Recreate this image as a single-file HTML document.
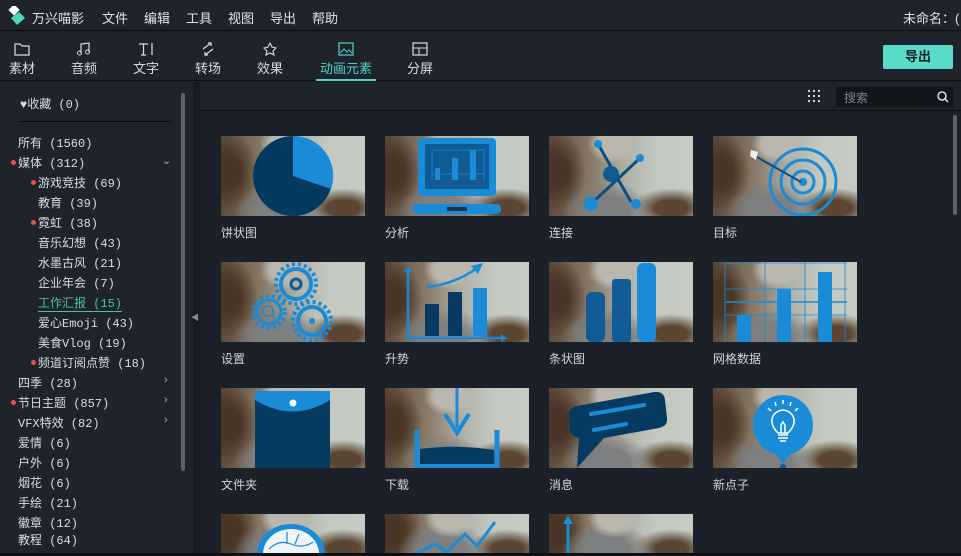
<!DOCTYPE html>
<html style="width:961px;height:556px;overflow:hidden"><head><meta charset="utf-8"><style>
*{margin:0;padding:0;box-sizing:border-box}
body{width:961px;height:556px;background:#1c2129;font-family:"Liberation Sans","Noto Sans CJK SC",sans-serif;color:#d8dde5;position:relative;overflow:hidden;font-size:13px}
.abs{position:absolute}
.top{left:0;top:0;width:961px;height:31px;background:#1f242c;border-bottom:1px solid #0c0f13}
.menu span{position:absolute;top:8px;font-size:13px;color:#e0e4ea}
.tb{left:0;top:32px;width:961px;height:49px;background:#1f242c;border-bottom:1px solid #0c0f13}
.tab{position:absolute;top:0;text-align:center;font-size:13px;color:#d8dde5}
.tab svg{display:block;margin:10px auto 2px}
.left{left:0;top:82px;width:193px;height:474px;background:#1f242c}
.li{position:absolute;font-size:12px;color:#d8dde5;white-space:nowrap;font-family:"Liberation Mono","Noto Sans CJK SC",monospace}
.dot{position:absolute;width:5px;height:5px;border-radius:50%;background:#e84b4b}
.arr{position:absolute;right:22px;color:#aab;font-size:11px}
.th{position:absolute;width:144px;height:80px;overflow:hidden;background-repeat:no-repeat;
background:
radial-gradient(ellipse 26px 20px at 45% 10%,#bab7ae 60%,transparent 100%) no-repeat,
radial-gradient(ellipse 45px 30px at 40% 95%,#7d7f80 50%,transparent 100%) no-repeat,
radial-gradient(ellipse 30px 40px at 5% 45%,#4a3626 40%,transparent 100%) no-repeat,
radial-gradient(ellipse 40px 20px at 85% 90%,#5a4632 40%,transparent 100%) no-repeat,
linear-gradient(90deg,#5c4a3a 0%,#8a7c6a 30%,#b1b3aa 55%,#c3c9c1 75%,#c6ccc4 100%)}
.th svg{position:absolute;left:0;top:0}
.lb{position:absolute;font-size:12px;color:#d0d6de}
</style></head><body>
<div class="abs top"></div>
<svg class="abs" style="left:8px;top:6px" width="18" height="20"><rect x="2" y="0" width="8" height="8" transform="rotate(45 6 4)" fill="#fff"/><path d="M3 12 L11 6 L17 12 L9 19Z" fill="#4fd6bf"/></svg>
<div class="menu"><span style="left:32px">万兴喵影</span><span style="left:102px">文件</span><span style="left:144px">编辑</span><span style="left:186px">工具</span><span style="left:228px">视图</span><span style="left:270px">导出</span><span style="left:312px">帮助</span><span style="left:903px">未命名：(</span></div>
<div class="abs tb"></div>
<div class="abs" style="left:0;top:32px;width:961px;height:50px">
<div class="tab" style="left:8px;width:28px"><svg width="16" height="14"><path d="M1 2h5l2 2h7v9H1z" fill="none" stroke="#d8dde5" stroke-width="1.2"/></svg>素材</div>
<div class="tab" style="left:70px;width:28px"><svg width="16" height="14"><path d="M5 11V2l8-1v9" fill="none" stroke="#d8dde5" stroke-width="1.2"/><circle cx="3.5" cy="11" r="2" fill="none" stroke="#d8dde5"/><circle cx="11.5" cy="10" r="2" fill="none" stroke="#d8dde5"/></svg>音频</div>
<div class="tab" style="left:132px;width:28px"><svg width="16" height="14"><path d="M1 2h9M5.5 2v11M3 13h5M14 1v12" fill="none" stroke="#d8dde5" stroke-width="1.2"/></svg>文字</div>
<div class="tab" style="left:194px;width:28px"><svg width="16" height="14"><path d="M3 7l8-6M8 1h3v3M13 7l-8 6M8 13H5v-3" fill="none" stroke="#d8dde5" stroke-width="1.2"/></svg>转场</div>
<div class="tab" style="left:256px;width:28px"><svg width="16" height="14"><path d="M8 1l2 4 4 1-3 3 1 4-4-2-4 2 1-4-3-3 4-1z" fill="none" stroke="#d8dde5" stroke-width="1.1"/></svg>效果</div>
<div class="tab" style="left:318px;width:56px;color:#4fd6bf"><svg width="16" height="14"><rect x="1" y="1" width="14" height="12" fill="none" stroke="#4fd6bf" stroke-width="1.2"/><path d="M2 11l4-4 3 3 2-2 3 3" fill="none" stroke="#4fd6bf"/></svg>动画元素<div style="height:2px;background:#4fd6bf;margin-top:2px;width:60px;margin-left:-2px"></div></div>
<div class="tab" style="left:406px;width:28px"><svg width="16" height="14"><rect x="1" y="1" width="14" height="12" fill="none" stroke="#d8dde5" stroke-width="1.2"/><path d="M1 6h14M7 6v7" stroke="#d8dde5"/></svg>分屏</div>
</div>
<div class="abs" style="left:883px;top:45px;width:70px;height:24px;background:#58dcc8;border-radius:2px;color:#17202a;font-weight:bold;font-size:13px;text-align:center;line-height:24px">导出</div>

<div class="abs left"></div>
<div class="abs" style="left:181px;top:93px;width:4px;height:378px;background:#5b6271;border-radius:2px"></div>
<div class="abs" style="left:193px;top:82px;width:7px;height:471px;background:#181c22"></div>
<div class="abs" style="left:191px;top:312px;color:#889;font-size:8px">◀</div>
<div class="li" style="left:20px;top:95px">♥收藏 (0)</div>
<div class="abs" style="left:20px;top:121px;width:151px;height:1px;background:#07090b"></div>
<div class="li" style="left:18px;top:134px">所有 (1560)</div>
<div class="dot" style="left:11px;top:160px"></div><div class="li" style="left:18px;top:154px">媒体 (312)</div><div class="arr" style="top:154px;left:162px">⌄</div>
<div class="dot" style="left:31px;top:180px"></div><div class="li" style="left:38px;top:174px">游戏竞技 (69)</div>
<div class="li" style="left:38px;top:194px">教育 (39)</div>
<div class="dot" style="left:31px;top:220px"></div><div class="li" style="left:38px;top:214px">霓虹 (38)</div>
<div class="li" style="left:38px;top:234px">音乐幻想 (43)</div>
<div class="li" style="left:38px;top:254px">水墨古风 (21)</div>
<div class="li" style="left:38px;top:274px">企业年会 (7)</div>
<div class="li" style="left:38px;top:294px;color:#4fbcb0;border-bottom:1px solid #4fbcb0">工作汇报 (15)</div>
<div class="li" style="left:38px;top:314px">爱心Emoji (43)</div>
<div class="li" style="left:38px;top:334px">美食Vlog (19)</div>
<div class="dot" style="left:31px;top:360px"></div><div class="li" style="left:38px;top:354px">频道订阅点赞 (18)</div>
<div class="li" style="left:18px;top:374px">四季 (28)</div><div class="arr" style="top:374px;left:164px">›</div>
<div class="dot" style="left:11px;top:400px"></div><div class="li" style="left:18px;top:394px">节日主题 (857)</div><div class="arr" style="top:394px;left:164px">›</div>
<div class="li" style="left:18px;top:414px">VFX特效 (82)</div><div class="arr" style="top:414px;left:164px">›</div>
<div class="li" style="left:18px;top:434px">爱情 (6)</div>
<div class="li" style="left:18px;top:454px">户外 (6)</div>
<div class="li" style="left:18px;top:474px">烟花 (6)</div>
<div class="li" style="left:18px;top:494px">手绘 (21)</div>
<div class="li" style="left:18px;top:514px">徽章 (12)</div>
<div class="li" style="left:18px;top:533px;line-height:17px;height:18px">教程 (64)</div>

<div class="abs" style="left:200px;top:82px;width:761px;height:29px;background:#1f242c;border-bottom:1px solid #0c0f13"></div>
<svg class="abs" style="left:808px;top:90px" width="14" height="14" fill="#cfd4dc"><rect x="0" y="0" width="2" height="2"/><rect x="5" y="0" width="2" height="2"/><rect x="10" y="0" width="2" height="2"/><rect x="0" y="5" width="2" height="2"/><rect x="5" y="5" width="2" height="2"/><rect x="10" y="5" width="2" height="2"/><rect x="0" y="10" width="2" height="2"/><rect x="5" y="10" width="2" height="2"/><rect x="10" y="10" width="2" height="2"/></svg>
<div class="abs" style="left:836px;top:87px;width:117px;height:20px;background:#12161b;color:#7d838c;font-size:12px;padding:2px 8px">搜索</div>
<svg class="abs" style="left:937px;top:91px" width="12" height="12"><circle cx="5" cy="5" r="4" fill="none" stroke="#dde" stroke-width="1.5"/><path d="M8 8l3 3" stroke="#dde" stroke-width="1.5"/></svg>
<div class="abs" style="left:953px;top:115px;width:4px;height:100px;background:#5b6271;border-radius:2px"></div>

<div class="th" style="left:221px;top:136px"><svg width="144" height="80"><circle cx="72" cy="40" r="40" fill="#053a60"/><path d="M72 40V0A40 40 0 0 1 110 53Z" fill="#1a8bd6"/></svg></div>
<div class="lb" style="left:221px;top:224px">饼状图</div>
<div class="th" style="left:385px;top:136px"><svg width="144" height="80"><rect x="33" y="2" width="78" height="58" rx="4" fill="#1a8bd6"/><rect x="40" y="8" width="64" height="45" fill="#0f5c95"/><path d="M47 14v30M47 38h52M47 14h52v30" stroke="#1a8bd6" fill="none" stroke-width=".8"/><rect x="50" y="32" width="5" height="12" fill="#1a8bd6"/><rect x="67" y="22" width="6" height="22" fill="#1a8bd6"/><rect x="85" y="14" width="6" height="30" fill="#1a8bd6"/><rect x="28" y="68" width="88" height="10" rx="4" fill="#1a8bd6"/><rect x="62" y="71" width="20" height="4" fill="#253545"/></svg></div>
<div class="lb" style="left:385px;top:224px">分析</div>
<div class="th" style="left:549px;top:136px"><svg width="144" height="80"><path d="M49 8L82 66M42 68L91 22" stroke="#0b4f80" stroke-width="3"/><circle cx="62" cy="38" r="8" fill="#0f5c95"/><circle cx="49" cy="8" r="4" fill="#1a8bd6"/><circle cx="91" cy="22" r="4" fill="#1a8bd6"/><circle cx="42" cy="68" r="7" fill="#1a8bd6"/><circle cx="87" cy="68" r="5" fill="#1a8bd6"/></svg></div>
<div class="lb" style="left:549px;top:224px">连接</div>
<div class="th" style="left:713px;top:136px"><svg width="144" height="80"><g fill="none" stroke="#1a8bd6" stroke-width="3"><circle cx="90" cy="46" r="33"/><circle cx="90" cy="46" r="22"/><circle cx="90" cy="46" r="11"/></g><circle cx="90" cy="46" r="4" fill="#1a8bd6"/><path d="M42 20L88 46" stroke="#0b4f80" stroke-width="2"/><path d="M38 14l7 2 -2 8 -6-4z" fill="#eee"/></svg></div>
<div class="lb" style="left:713px;top:224px">目标</div>

<div class="th" style="left:221px;top:262px"><svg width="144" height="80"><g fill="none" stroke="#1a8bd6"><circle cx="75" cy="22" r="15" stroke-width="4"/><circle cx="75" cy="22" r="20" stroke-width="4" stroke-dasharray="3 3"/><circle cx="48" cy="50" r="12" stroke-width="3"/><circle cx="48" cy="50" r="16" stroke-width="4" stroke-dasharray="3 3"/><circle cx="91" cy="59" r="14" stroke-width="4"/><circle cx="91" cy="59" r="19" stroke-width="4" stroke-dasharray="3 3"/><circle cx="47" cy="49" r="5" stroke-width="1.5"/><path d="M51 53l4 4" stroke-width="1.5"/></g><circle cx="75" cy="22" r="5" fill="none" stroke="#0f5c95" stroke-width="3"/><circle cx="91" cy="59" r="3" fill="#1a8bd6"/></svg></div>
<div class="lb" style="left:221px;top:350px">设置</div>
<div class="th" style="left:385px;top:262px"><svg width="144" height="80"><path d="M23 6V76H120" stroke="#1a8bd6" stroke-width="2.5" fill="none"/><path d="M19 10l4-6 4 6zM116 72l6 4-6 4z" fill="#1a8bd6"/><path d="M42 25Q70 22 92 6" stroke="#1a8bd6" stroke-width="2.5" fill="none"/><path d="M86 4l12-3-5 11z" fill="#1a8bd6"/><rect x="40" y="42" width="14" height="32" fill="#063a60"/><rect x="63" y="30" width="14" height="44" fill="#063a60"/><rect x="88" y="26" width="14" height="48" fill="#1a8bd6"/></svg></div>
<div class="lb" style="left:385px;top:350px">升势</div>
<div class="th" style="left:549px;top:262px"><svg width="144" height="80"><rect x="37" y="30" width="19" height="50" rx="6" fill="#115c96"/><rect x="63" y="17" width="19" height="63" rx="3" fill="#115c96"/><rect x="88" y="1" width="19" height="79" rx="6" fill="#1a8bd6"/></svg></div>
<div class="lb" style="left:549px;top:350px">条状图</div>
<div class="th" style="left:713px;top:262px"><svg width="144" height="80"><g stroke="#1a8bd6" stroke-width=".8"><path d="M12 0v80M52 0v80M92 0v80M132 0v80M12 1h122M12 27h122M12 40h122M12 53h122"/></g><path d="M12 40h122" stroke="#1a8bd6" stroke-width="1.5"/><rect x="24" y="53" width="14" height="27" fill="#1a8bd6"/><rect x="64" y="27" width="14" height="53" fill="#1a8bd6"/><rect x="105" y="10" width="14" height="70" fill="#1a8bd6"/></svg></div>
<div class="lb" style="left:713px;top:350px">网格数据</div>

<div class="th" style="left:221px;top:388px"><svg width="144" height="80"><rect x="34" y="3" width="75" height="77" fill="#063a60"/><path d="M34 3h75v9Q72 35 34 12z" fill="#1a8bd6"/><circle cx="72" cy="15" r="3.5" fill="#fff"/></svg></div>
<div class="lb" style="left:221px;top:476px">文件夹</div>
<div class="th" style="left:385px;top:388px"><svg width="144" height="80"><path d="M32 42v38M112 42v38" stroke="#1a8bd6" stroke-width="5"/><path d="M35 61Q72 56 109 62v15H35z" fill="#063a60"/><path d="M72 0v40" stroke="#1a8bd6" stroke-width="3"/><path d="M60 26l12 19 12-19" stroke="#1a8bd6" stroke-width="4" fill="none"/><path d="M32 78h80" stroke="#1a8bd6" stroke-width="4"/></svg></div>
<div class="lb" style="left:385px;top:476px">下载</div>
<div class="th" style="left:549px;top:388px"><svg width="144" height="80"><path d="M20 30Q18 20 28 18L105 4Q115 3 116 12L118 30Q119 38 110 40L55 50L28 80L30 50Q22 49 21 42z" fill="#063a60"/><path d="M42 26L95 17M45 42L77 36" stroke="#1a8bd6" stroke-width="4" stroke-linecap="round"/></svg></div>
<div class="lb" style="left:549px;top:476px">消息</div>
<div class="th" style="left:713px;top:388px"><svg width="144" height="80"><circle cx="70" cy="37" r="30" fill="#1a8bd6"/><path d="M60 62L70 76L80 62z" fill="#1a8bd6"/><circle cx="70" cy="79" r="3" fill="#0f5c95"/><g fill="none" stroke="#fff" stroke-width="1.5"><path d="M65 45Q58 38 59 31Q61 23 70 22Q79 23 81 31Q82 38 75 45z"/><path d="M65 47h10M65 50h10M67 53h6M68 45v-8l2-3 2 3v8"/><path d="M55 20l3 3M62 14l1 4M70 12v4M78 14l-1 4M85 20l-3 3"/></g></svg></div>
<div class="lb" style="left:713px;top:476px">新点子</div>

<div class="th" style="left:221px;top:514px;height:39px"><svg width="144" height="39"><ellipse cx="70" cy="40" rx="34" ry="30" fill="#1a8bd6"/><ellipse cx="70" cy="40" rx="28" ry="25" fill="#eef4f8"/><path d="M48 35Q58 25 70 30T92 28M66 18v12M78 20l-4 10" stroke="#1a8bd6" fill="none" stroke-width="1.2"/></svg></div>
<div class="th" style="left:385px;top:514px;height:39px"><svg width="144" height="39"><path d="M30 40L50 30L62 38L80 20L92 32L110 8" stroke="#1a8bd6" stroke-width="3" fill="none"/></svg></div>
<div class="th" style="left:549px;top:514px;height:39px"><svg width="144" height="39"><path d="M19 6v33" stroke="#1a8bd6" stroke-width="3"/><path d="M14 10l5-9 5 9z" fill="#1a8bd6"/></svg></div>
<div class="abs" style="left:0;top:553px;width:961px;height:3px;background:#0c0f13"></div>
</body></html>
